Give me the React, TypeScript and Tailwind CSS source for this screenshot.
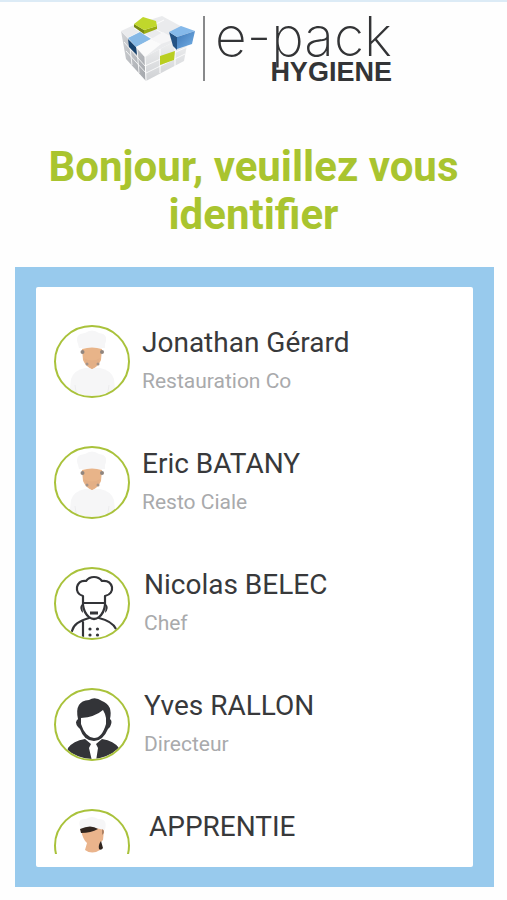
import type { ReactNode } from "react";

function CubeLogo() {
  return (
    <svg viewBox="0 0 78 70" className="h-[70px] w-[78px] shrink-0" aria-hidden="true">
      <defs>
        <linearGradient id="leftFace" x1="0" y1="0" x2="1" y2="1">
          <stop offset="0" stopColor="#d2d4d7" />
          <stop offset="1" stopColor="#a3a6ab" />
        </linearGradient>
        <linearGradient id="frontFace" x1="0" y1="0" x2="0" y2="1">
          <stop offset="0" stopColor="#eff0f1" />
          <stop offset="1" stopColor="#cfd1d4" />
        </linearGradient>
        <linearGradient id="blueFace" x1="0" y1="0" x2="1" y2="1">
          <stop offset="0" stopColor="#3f78b8" />
          <stop offset="1" stopColor="#75b0e6" />
        </linearGradient>
      </defs>
      <path d="M2 19 L26 45 L27 69 L7 47Z" fill="url(#leftFace)" />
      <path d="M26 45 L56 29 L68 33 L65 49 L27 69Z" fill="url(#frontFace)" />
      <path d="M2 19 L15 13 L43 4 L67 17 L56 29 L26 45Z" fill="#eaebed" />
      <g stroke="#fff" strokeWidth="1" fill="none">
        <path d="M26 45 L27 69 M41 37 V61 M56 29 V54" />
        <path d="M5 30 L26 54 L68 35 M7 39 L27 61 L66 42 M10 27 L13 53 M18 36 L20 61" strokeOpacity="0.8" />
        <path d="M15 16 L42 32 M27 12 L56 28 M9 26 L45 8" strokeOpacity="0.8" />
      </g>
      <path d="M9 27 L17 35 L18 43 L10 35Z" fill="#17436f" />
      <path d="M9 26 L21 20 L32 27 L17 35Z" fill="#86b9e6" />
      <path d="M17 35 L32 27 L42 32 L26 45Z" fill="#fbfbfb" />
      <path d="M32 27 L44 20 L56 27 L42 32Z" fill="#f6f6f7" />
      <path d="M15 12 L25 18 L25 22 L15 15Z" fill="#788a10" />
      <path d="M25 18 L38 14 L38 17 L25 22Z" fill="#9aad12" />
      <path d="M15 12 L24 5 L37 9 L38 14 L25 18Z" fill="#c0d72c" />
      <path d="M50 20 L58 25 L58 38 L54 34Z" fill="#255385" />
      <path d="M50 20 L62 14 L76 19 L58 25Z" fill="#85b9ea" />
      <path d="M58 25 L76 19 L73 32 L58 37Z" fill="url(#blueFace)" />
      <path d="M41 44 L56 39 L55 48 L41 53Z" fill="#b9ce20" />
    </svg>
  );
}

function Avatar({ children }: { children: ReactNode }) {
  return (
    <svg viewBox="0 0 76 73" className="h-[73px] w-[76px] shrink-0" aria-hidden="true">
      <defs>
        <clipPath id="avatarClip">
          <ellipse cx="38" cy="36.5" rx="36" ry="34.5" />
        </clipPath>
      </defs>
      <g clipPath="url(#avatarClip)">{children}</g>
      <ellipse cx="38" cy="36.5" rx="37" ry="35.5" fill="none" stroke="#a9c23b" strokeWidth="2" />
    </svg>
  );
}

function PaleCook() {
  return (
    <Avatar>
      <path d="M15 73 L17 54 Q20 45 31 43 L46 43 Q57 45 60 54 L62 73Z" fill="#f6f6f7" />
      <path d="M21 60 L23 73 M55 60 L53 73" stroke="#ececee" strokeWidth="1" />
      <path d="M24 19 Q20 9 31 8 Q38 3 45 8 Q55 9 51 19 V23 H25Z" fill="#f6f6f7" />
      <path d="M28 24 Q38 21 48 24 L47 35 Q44 42 38 44 Q32 42 29 35Z" fill="#e8b489" />
      <path d="M30 33 Q38 38 46 33 L44 39 L38 44 L32 39Z" fill="#e3af86" />
      <circle cx="28.5" cy="27" r="2" fill="#90857e" />
      <circle cx="48" cy="27" r="2" fill="#90857e" />
      <circle cx="33" cy="39" r="1.5" fill="#a59285" />
      <circle cx="44" cy="39" r="1.5" fill="#a59285" />
    </Avatar>
  );
}

function OutlineChef() {
  return (
    <Avatar>
      <g fill="none" stroke="#333438" strokeWidth="2.2" strokeLinejoin="round" strokeLinecap="round">
        <path d="M29 38 V29 Q22 27 23 20 Q25 13 32 14 Q35 10 40 10 Q45 10 48 14 Q56 13 58 20 Q59 27 51 29 V38" />
        <path d="M29 36 H51 M29 38 Q30 46 35 50 Q40 54 45 50 Q50 46 51 38" />
        <path d="M18 64 Q20 55 35 51 M45 51 Q58 54 62 62 M29 55 V73" />
      </g>
      <path d="M28 37 Q24 41 29 46Z M52 37 Q56 41 51 46Z" fill="#333438" />
      <path d="M36 46 H44" stroke="#333438" strokeWidth="3" />
      <g fill="#333438">
        <circle cx="36" cy="62" r="1.6" />
        <circle cx="43.5" cy="62" r="1.6" />
        <circle cx="36" cy="68" r="1.6" />
        <circle cx="43.5" cy="68" r="1.6" />
      </g>
    </Avatar>
  );
}

function Manager() {
  return (
    <Avatar>
      <path
        d="M24 31 Q20 13 35 12 Q41 8 48 13 Q59 17 56 31 Q59 33 56 39 L54 41 Q49 53 40 53 Q30 53 26 41 L24 39 Q20 34 24 31Z"
        fill="#333438"
      />
      <path d="M27 30 Q41 29 49 22 Q51 25 52 30 V36 Q48 50 40 50 Q31 49 27 36Z" fill="#fff" />
      <path d="M11 73 L14 60 Q19 53 31 51 L37 56 L35 60 L38 73Z" fill="#333438" />
      <path d="M67 73 L65 60 Q60 53 48 51 L42 56 L44 60 L42 73Z" fill="#333438" />
    </Avatar>
  );
}

function Apprentice() {
  return (
    <Avatar>
      <path d="M27 20 Q22 9 32 10 Q38 6 44 10 Q54 9 51 21Z" fill="#f6f6f7" />
      <path d="M27 21 Q38 17 50 21 L49 31 L46 34 L46 41 Q38 46 31 41 L33 34 Q29 31 27 21Z" fill="#eab48c" />
      <path d="M26 20 Q37 15 44 20 Q37 24 27 24Z" fill="#30251f" />
      <path d="M48 20 Q52 23 48 26Z" fill="#ac8165" />
      <path d="M47 32 Q44 36 45 40 Q47 42 49 39Z" fill="#30251f" />
    </Avatar>
  );
}

const people = [
  { name: "Jonathan Gérard", role: "Restauration Co", icon: <PaleCook />, gap: "gap-3" },
  { name: "Eric BATANY", role: "Resto Ciale", icon: <PaleCook />, gap: "gap-3" },
  { name: "Nicolas BELEC", role: "Chef", icon: <OutlineChef />, gap: "gap-3.5" },
  { name: "Yves RALLON", role: "Directeur", icon: <Manager />, gap: "gap-3.5" },
  { name: " APPRENTIE", role: "", icon: <Apprentice />, gap: "gap-3" },
];

export default function App() {
  return (
    <div className="min-h-screen border-t-2 border-[#dcebf6] bg-[#fefefe] pb-3 font-['Roboto',sans-serif]">
      <header className="flex h-[86px] justify-center pt-2.5 pl-1">
        <CubeLogo />
        <div className="mt-1 ml-1.5 h-[65px] w-0.5 bg-[#88898b]" />
        <div className="ml-2.5 flex flex-col items-end text-[#333436]">
          <span className="font-['Inter',sans-serif] text-[55px] leading-[48px] font-extralight">e-pack</span>
          <span className="-mt-px font-['Liberation_Sans',sans-serif] text-[27px] leading-[26px] font-bold">HYGIENE</span>
        </div>
      </header>
      <h1 className="mx-auto mt-[55px] max-w-[440px] text-center text-[42px] leading-[48px] font-bold text-[#a9c42f]">
        Bonjour, veuillez vous identifier
      </h1>
      <main className="mt-7 mr-[13px] ml-[15px] bg-[#98caed] px-[21px] py-5">
        <div className="rounded-xs bg-white pt-[38px] pb-[13px]">
          <ul className="h-[529px] overflow-hidden">
            {people.map((p) => (
              <li key={p.name} className="h-[121px]">
                <button type="button" className={`flex w-full items-start pl-[18px] text-left ${p.gap}`}>
                  {p.icon}
                  <span className="flex flex-col gap-2.5 pt-0.5">
                    <span className="text-[28px] leading-8 whitespace-pre text-[#38393b]">{p.name}</span>
                    <span className="text-[21px] leading-6 text-[#a9aaac]">{p.role}</span>
                  </span>
                </button>
              </li>
            ))}
          </ul>
        </div>
      </main>
    </div>
  );
}
